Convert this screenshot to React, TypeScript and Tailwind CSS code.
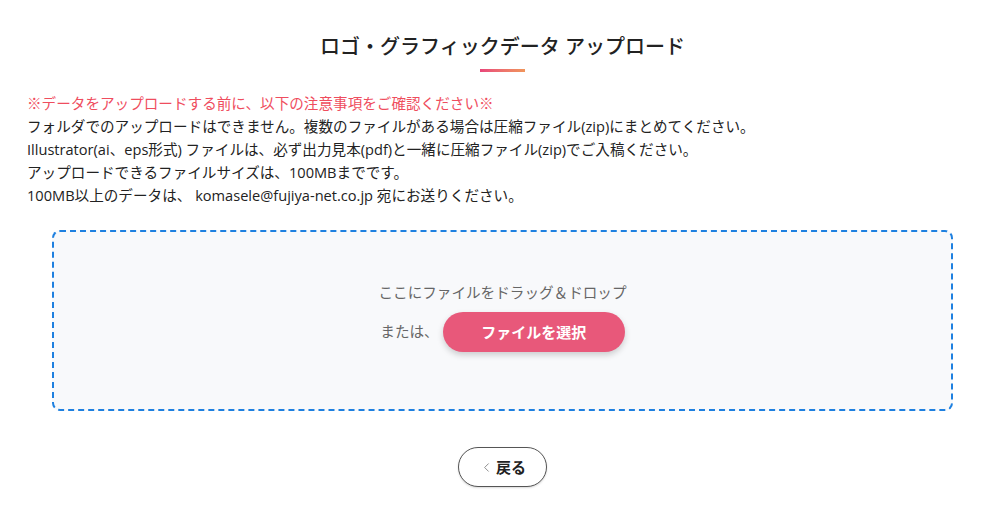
import { ChevronLeft } from "lucide-react";

const notes = [
  "フォルダでのアップロードはできません。複数のファイルがある場合は圧縮ファイル(zip)にまとめてください。",
  "Illustrator(ai、eps形式) ファイルは、必ず出力見本(pdf)と一緒に圧縮ファイル(zip)でご入稿ください。",
  "アップロードできるファイルサイズは、100MBまでです。",
  "100MB以上のデータは、 komasele@fujiya-net.co.jp 宛にお送りください。",
];

const App = () => {
  return (
    <div
      className="min-h-[530px] w-full bg-white text-[#222]"
      style={{ fontFamily: '"Open Sans", "Noto Sans CJK JP", sans-serif' }}
    >
      <div className="px-[27px] pt-[32px]">
        <div className="ml-[25px] w-[901px]">
          <h1 className="text-center text-[20px] leading-[30px] font-medium text-[#222]">
            ロゴ・グラフィックデータ アップロード
          </h1>
          <div className="mx-auto mt-[7px] h-[3px] w-[45px] bg-gradient-to-r from-[#e8457a] to-[#f0955a]" />
        </div>

        <div className="mt-[20px] text-[14.6px] leading-[23px]">
          <p className="text-[#ef4d5e]">
            ※データをアップロードする前に、以下の注意事項をご確認ください※
          </p>
          {notes.map((line) => (
            <p key={line} className="text-[#222]">
              {line}
            </p>
          ))}
        </div>

        <div className="ml-[25px] mt-[23px] flex h-[181px] w-[901px] flex-col items-center rounded-lg border-2 border-dashed border-[#1e80e0] bg-[#f8f9fb] pt-[48px]">
          <p className="text-[14.6px] leading-[24px] text-[#666]">
            ここにファイルをドラッグ＆ドロップ
          </p>
          <div className="mt-[8px] flex items-center gap-[4px]">
            <span className="text-[14.6px] text-[#666]">または、</span>
            <button className="h-[40px] w-[182px] rounded-full bg-[#e8587a] text-[15px] font-bold text-white shadow-[0_3px_6px_rgba(0,0,0,0.18)]">
              ファイルを選択
            </button>
          </div>
        </div>

        <div className="ml-[25px] mt-[36px] flex w-[901px] justify-center">
          <button className="flex h-[40px] w-[89px] items-center justify-center gap-[2px] rounded-full border border-[#555] bg-white text-[15px] font-bold text-[#222] shadow-[0_1px_2px_rgba(0,0,0,0.15)]">
            <ChevronLeft size={15} strokeWidth={1.5} className="text-[#888]" />
            戻る
          </button>
        </div>
      </div>
    </div>
  );
};

export default App;
